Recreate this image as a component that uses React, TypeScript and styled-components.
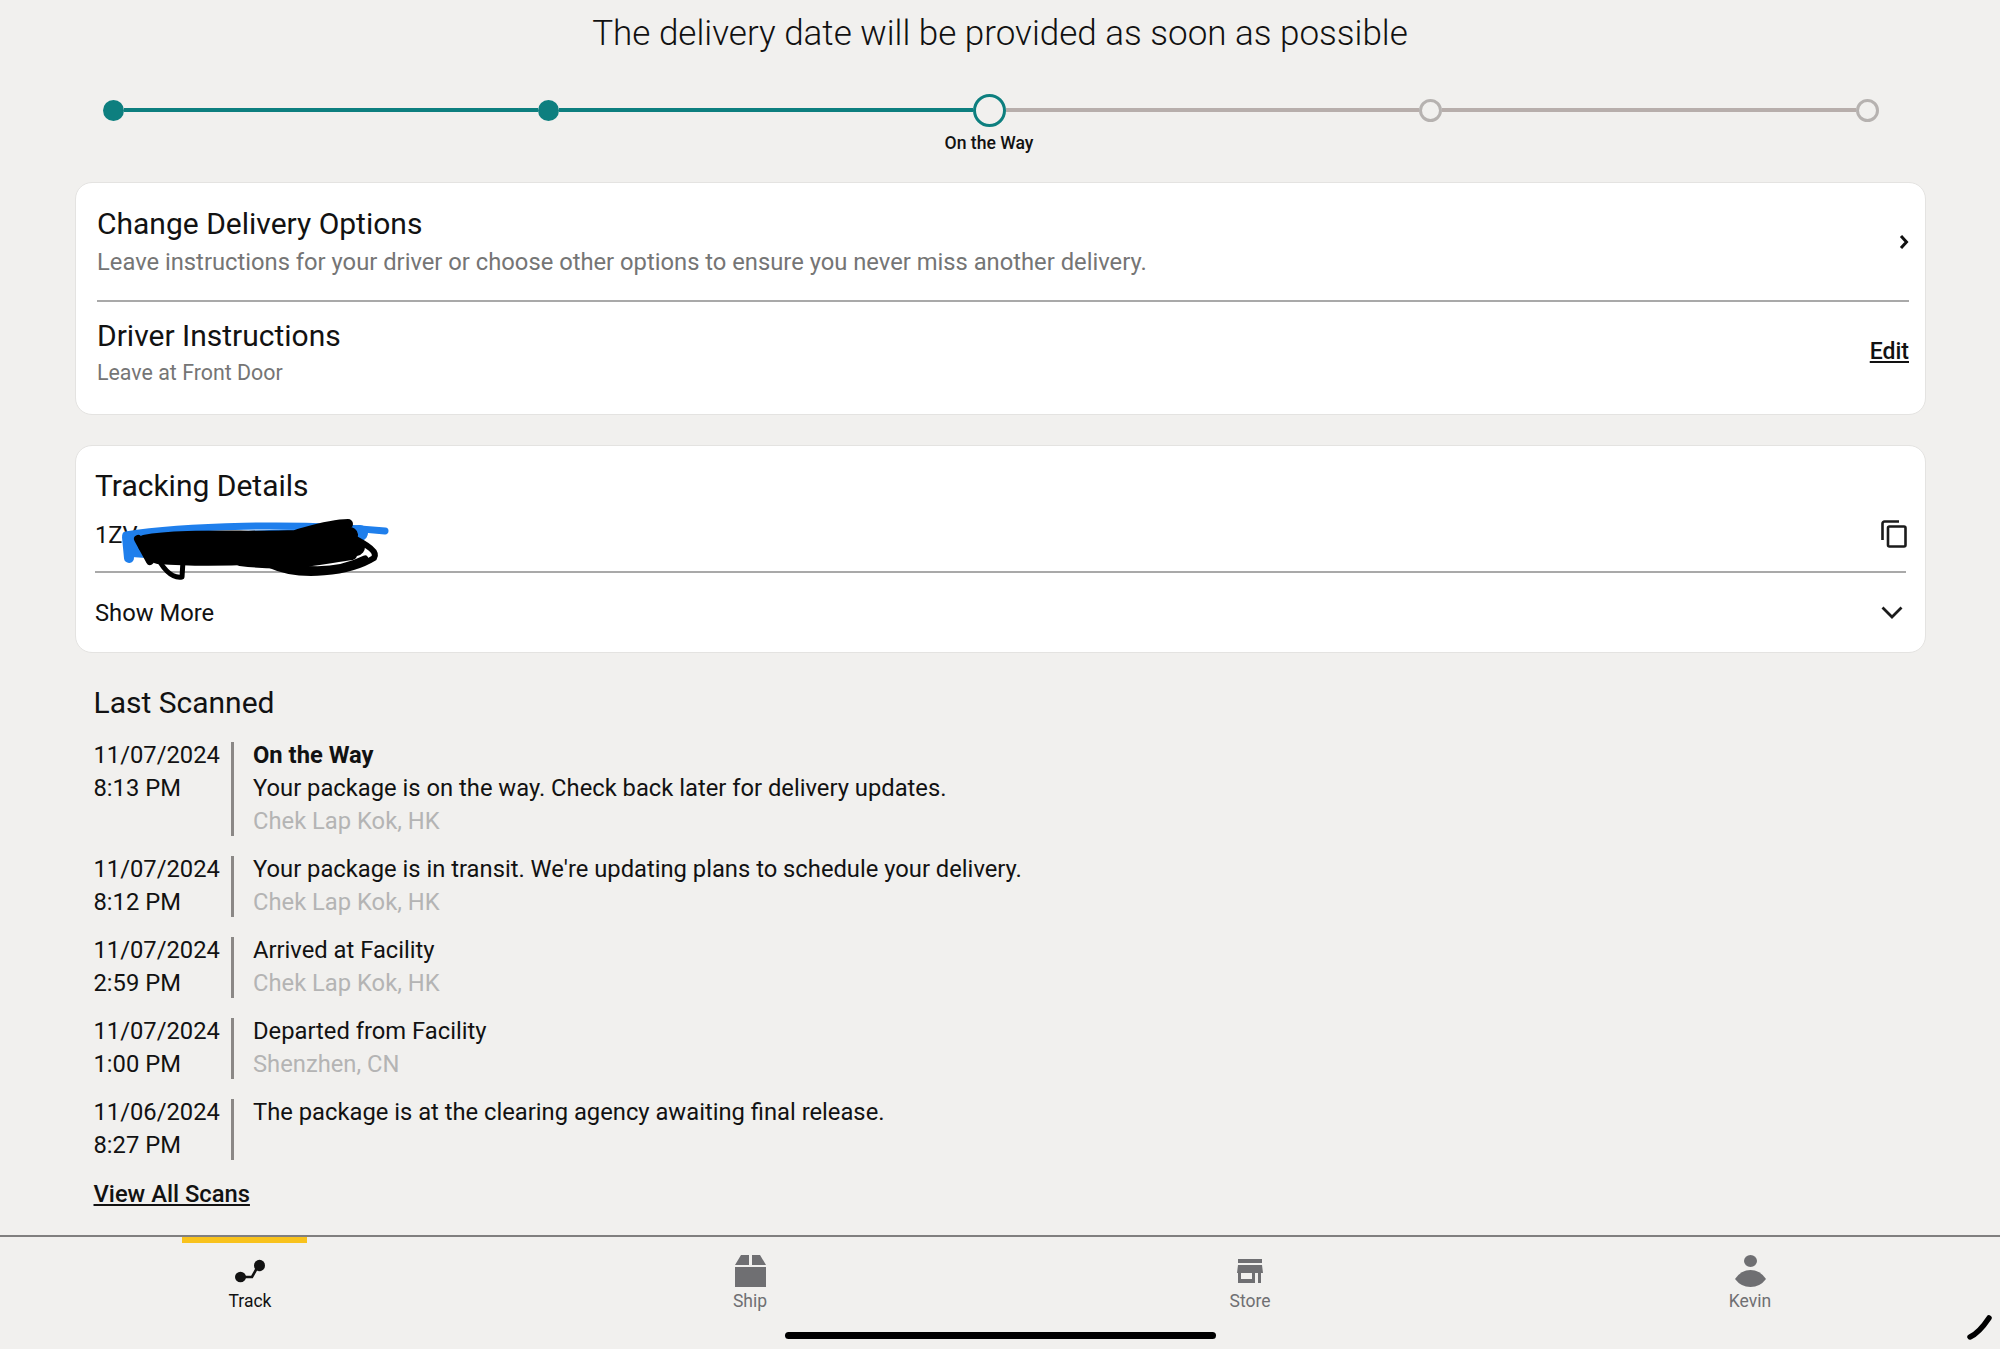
import React from "react";
import styled, { createGlobalStyle } from "styled-components";

const Global = createGlobalStyle`
  html, body { margin: 0; padding: 0; background: #f1f0ee; }
  body { font-family: Roboto, "Liberation Sans", sans-serif; color: #121212; }
  * { box-sizing: border-box; }
`;

const Page = styled.div`
  position: relative;
  width: 2000px;
  height: 1349px;
  display: flex;
  flex-direction: column;
  overflow: hidden;
  background: #f1f0ee;
`;
const Main = styled.main`
  flex: 1;
  min-height: 0;
`;
const Headline = styled.h1`
  margin: 0;
  height: 66px;
  font-size: 35px;
  line-height: 67px;
  font-weight: 300;
  text-align: center;
  color: #111;
`;
const Stepper = styled.div`
  display: flex;
  align-items: center;
  height: 88px;
  padding: 0 121px 0 103px;
`;
const Line = styled.div<{ $done?: boolean }>`
  flex: 1;
  height: 4px;
  background: ${(p) => (p.$done ? "#0d7f7f" : "#b7aeab")};
`;
const FilledDot = styled.div`
  width: 21px;
  height: 21px;
  border-radius: 50%;
  background: #0d7f7f;
`;
const EmptyDot = styled.div`
  width: 23px;
  height: 23px;
  border-radius: 50%;
  border: 3px solid #b6b2b0;
  background: #f1f0ee;
`;
const CurrentDot = styled.div`
  position: relative;
  width: 33px;
  height: 33px;
  border-radius: 50%;
  border: 3px solid #0d7f7f;
  background: #f1f0ee;
`;
const StepLabel = styled.span`
  position: absolute;
  top: 35px;
  left: 50%;
  transform: translateX(-50%);
  white-space: nowrap;
  font-size: 17.6px;
  line-height: 22px;
  font-weight: 500;
  color: #121212;
`;
const Card = styled.section<{ $top: number }>`
  position: relative;
  margin: ${(p) => p.$top}px 74px 0 75px;
  background: #fff;
  border: 1px solid #e4e3e1;
  border-radius: 17px;
`;
const DeliveryRow = styled.div`
  height: 119px;
  margin: 0 16px 0 21px;
  padding-top: 1px;
  display: flex;
  align-items: center;
  justify-content: space-between;
  border-bottom: 2px solid #a9a9a9;
`;
const DriverRow = styled.div`
  height: 112px;
  margin: 0 16px 0 21px;
  padding-top: 15px;
  display: flex;
  justify-content: space-between;
  align-items: flex-start;
`;
const RowTitle = styled.div`
  font-size: 30px;
  line-height: 38px;
  color: #121212;
`;
const RowSub = styled.div<{ $small?: boolean }>`
  font-size: ${(p) => (p.$small ? 21.4 : 23.75)}px;
  line-height: ${(p) => (p.$small ? 30 : 36)}px;
  margin-top: ${(p) => (p.$small ? 3 : 1)}px;
  color: #757575;
`;
const Chevron = styled.svg`
  display: block;
`;
const EditLink = styled.a`
  margin-top: 20px;
  font-size: 23px;
  line-height: 30px;
  font-weight: 500;
  text-decoration: underline;
  color: #121212;
`;
const TrackingHead = styled.div`
  padding: 21px 19px 0 19px;
`;
const TrackingTitle = styled.h2`
  margin: 0;
  font-size: 30px;
  line-height: 38px;
  font-weight: 400;
`;
const NumberRow = styled.div`
  height: 53px;
  margin-top: 15px;
  display: flex;
  align-items: flex-start;
  justify-content: space-between;
  border-bottom: 2px solid #a9a9a9;
  font-size: 23.75px;
  line-height: 30px;
`;
const CopyIcon = styled.svg`
  display: block;
  margin-right: -1px;
`;
const ShowMore = styled.div`
  height: 79px;
  padding: 0 22px 0 19px;
  display: flex;
  align-items: center;
  justify-content: space-between;
  font-size: 23.75px;
`;
const Scribble = styled.svg`
  position: absolute;
  left: 44px;
  top: 65px;
`;
const Scans = styled.div`
  padding: 31px 0 0 93.5px;
`;
const ScansTitle = styled.h2`
  margin: 0 0 20px;
  font-size: 30px;
  line-height: 38px;
  font-weight: 400;
`;
const ScanRow = styled.div<{ $lines: number }>`
  display: flex;
  height: ${(p) => p.$lines * 33 - 5}px;
  margin-bottom: 20px;
  font-size: 23.75px;
  line-height: 33px;
`;
const ScanDate = styled.div`
  width: 137.5px;
  margin-top: -3px;
`;
const ScanBar = styled.div`
  width: 3px;
  background: #8b8886;
`;
const ScanBody = styled.div`
  margin: -3px 0 0 19px;
`;
const ScanHead = styled.div`
  font-weight: 700;
`;
const ScanPlace = styled.div`
  color: #b4b4b4;
`;
const ViewAll = styled.a`
  display: block;
  margin-top: -2px;
  font-size: 23.75px;
  line-height: 33px;
  font-weight: 500;
  text-decoration: underline;
  color: #121212;
`;
const Nav = styled.nav`
  position: relative;
  height: 114px;
  display: grid;
  grid-template-columns: repeat(4, 1fr);
  border-top: 2px solid #807f7f;
`;
const NavMarker = styled.div`
  position: absolute;
  left: 182px;
  top: 0;
  width: 125px;
  height: 6px;
  background: #f8c21c;
`;
const NavItem = styled.div<{ $active?: boolean }>`
  display: flex;
  flex-direction: column;
  align-items: center;
  padding-top: 17px;
  color: ${(p) => (p.$active ? "#121212" : "#6f6f72")};
`;
const NavIcon = styled.div`
  width: 34px;
  height: 34px;
  display: flex;
  align-items: center;
  justify-content: center;
`;
const NavLabel = styled.span`
  margin-top: 1px;
  font-size: 17.5px;
  line-height: 24px;
`;
const HomeBar = styled.div`
  position: absolute;
  left: 785px;
  bottom: 10px;
  width: 431px;
  height: 7px;
  border-radius: 4px;
  background: #000;
`;
const CornerMark = styled.svg`
  position: absolute;
  right: 7px;
  bottom: 8px;
`;

const scans = [
  { d: "11/07/2024", t: "8:13 PM", head: "On the Way", msg: "Your package is on the way. Check back later for delivery updates.", place: "Chek Lap Kok, HK" },
  { d: "11/07/2024", t: "8:12 PM", msg: "Your package is in transit. We're updating plans to schedule your delivery.", place: "Chek Lap Kok, HK" },
  { d: "11/07/2024", t: "2:59 PM", msg: "Arrived at Facility", place: "Chek Lap Kok, HK" },
  { d: "11/07/2024", t: "1:00 PM", msg: "Departed from Facility", place: "Shenzhen, CN" },
  { d: "11/06/2024", t: "8:27 PM", msg: "The package is at the clearing agency awaiting final release." },
];

export default function App() {
  return (
    <Page>
      <Global />
      <Main>
        <Headline>The delivery date will be provided as soon as possible</Headline>
        <Stepper>
          <FilledDot />
          <Line $done />
          <FilledDot />
          <Line $done />
          <CurrentDot>
            <StepLabel>On the Way</StepLabel>
          </CurrentDot>
          <Line />
          <EmptyDot />
          <Line />
          <EmptyDot />
        </Stepper>

        <Card $top={28}>
          <DeliveryRow>
            <div>
              <RowTitle>Change Delivery Options</RowTitle>
              <RowSub>Leave instructions for your driver or choose other options to ensure you never miss another delivery.</RowSub>
            </div>
            <Chevron width="10" height="16" viewBox="0 0 10 16">
              <path d="M2 2l5.5 6L2 14" fill="none" stroke="#111" strokeWidth="3" />
            </Chevron>
          </DeliveryRow>
          <DriverRow>
            <div>
              <RowTitle>Driver Instructions</RowTitle>
              <RowSub $small>Leave at Front Door</RowSub>
            </div>
            <EditLink>Edit</EditLink>
          </DriverRow>
        </Card>

        <Card $top={30}>
          <TrackingHead>
            <TrackingTitle>Tracking Details</TrackingTitle>
            <NumberRow>
              <span>1ZV</span>
              <CopyIcon width="26" height="28" viewBox="0 0 26 28">
                <path d="M1.5 20V3.5a2 2 0 0 1 2-2H18" fill="none" stroke="#1b1b1b" strokeWidth="2.6" />
                <rect x="7" y="6.5" width="17.5" height="20" rx="1.5" fill="none" stroke="#1b1b1b" strokeWidth="2.6" />
              </CopyIcon>
            </NumberRow>
          </TrackingHead>
          <ShowMore>
            Show More
            <svg width="22" height="13" viewBox="0 0 22 13">
              <path d="M1.5 1.5L11 11l9.5-9.5" fill="none" stroke="#1b1b1b" strokeWidth="2.8" />
            </svg>
          </ShowMore>
          <Scribble width="280" height="80" viewBox="0 0 280 80" fill="none" strokeLinecap="round" strokeLinejoin="round">
            <g stroke="#1f7fec">
              <path d="M6 24C60 15 180 11 265 20" strokeWidth="7" />
              <path d="M7 26L9 47" strokeWidth="10" />
              <path d="M12 32C60 28 200 28 240 22" strokeWidth="16" />
              <path d="M12 42L40 44L100 50L225 45" strokeWidth="8" />
            </g>
            <g stroke="#000">
              <path d="M24 29C60 22 130 26 175 24C190 20 210 13 228 13" strokeWidth="10" />
              <path d="M26 34C80 30 170 32 230 24" strokeWidth="16" />
              <path d="M38 44C90 48 150 46 236 36" strokeWidth="18" />
              <path d="M120 50C170 56 190 50 232 44" strokeWidth="10" />
              <path d="M150 54C180 68 230 62 254 47C258 41 250 35 226 23" strokeWidth="6" />
              <path d="M170 56C200 62 225 58 245 48" strokeWidth="7" />
              <path d="M18 28L30 50" strokeWidth="8" />
              <path d="M34 40C41 55 50 68 62 66L63 50" strokeWidth="5" />
            </g>
          </Scribble>
        </Card>

        <Scans>
          <ScansTitle>Last Scanned</ScansTitle>
          {scans.map((s, i) => (
            <ScanRow key={i} $lines={Math.max(2, (s.head ? 1 : 0) + 1 + (s.place ? 1 : 0))}>
              <ScanDate>
                {s.d}
                <br />
                {s.t}
              </ScanDate>
              <ScanBar />
              <ScanBody>
                {s.head && <ScanHead>{s.head}</ScanHead>}
                <div>{s.msg}</div>
                {s.place && <ScanPlace>{s.place}</ScanPlace>}
              </ScanBody>
            </ScanRow>
          ))}
          <ViewAll>View All Scans</ViewAll>
        </Scans>
      </Main>

      <Nav>
        <NavMarker />
        <NavItem $active>
          <NavIcon>
            <svg width="32" height="24" viewBox="0 0 32 24">
              <path d="M8 18h10l5-9" fill="none" stroke="currentColor" strokeWidth="2.6" />
              <ellipse cx="6.5" cy="18" rx="5.5" ry="5.2" fill="currentColor" />
              <ellipse cx="25.5" cy="6.5" rx="5.5" ry="5.8" fill="currentColor" />
            </svg>
          </NavIcon>
          <NavLabel>Track</NavLabel>
        </NavItem>
        <NavItem>
          <NavIcon>
            <svg width="31" height="32" viewBox="0 0 31 32">
              <path d="M6 0h8v10H0zM17 0h8l6 10H17z" fill="currentColor" />
              <rect x="0" y="12" width="31" height="20" fill="currentColor" />
            </svg>
          </NavIcon>
          <NavLabel>Ship</NavLabel>
        </NavItem>
        <NavItem>
          <NavIcon>
            <svg width="26" height="24" viewBox="0 0 26 24">
              <rect x="1" y="0" width="24" height="4" fill="currentColor" />
              <path d="M1 6h24l1 8H0z" fill="currentColor" />
              <path d="M1 14h3v6h11v-6h3v10H1zM21 14h3v10h-3z" fill="currentColor" />
            </svg>
          </NavIcon>
          <NavLabel>Store</NavLabel>
        </NavItem>
        <NavItem>
          <NavIcon>
            <svg width="31" height="32" viewBox="0 0 31 32">
              <ellipse cx="15.5" cy="6" rx="6.5" ry="6" fill="currentColor" />
              <path d="M0 24Q6 15 15.5 15T31 24Q25 32 15.5 32T0 24Z" fill="currentColor" />
            </svg>
          </NavIcon>
          <NavLabel>Kevin</NavLabel>
        </NavItem>
      </Nav>
      <HomeBar />
      <CornerMark width="26" height="28" viewBox="0 0 26 28">
        <path d="M3 24Q12 20 22 5" fill="none" stroke="#000" strokeWidth="5.5" strokeLinecap="round" />
      </CornerMark>
    </Page>
  );
}
